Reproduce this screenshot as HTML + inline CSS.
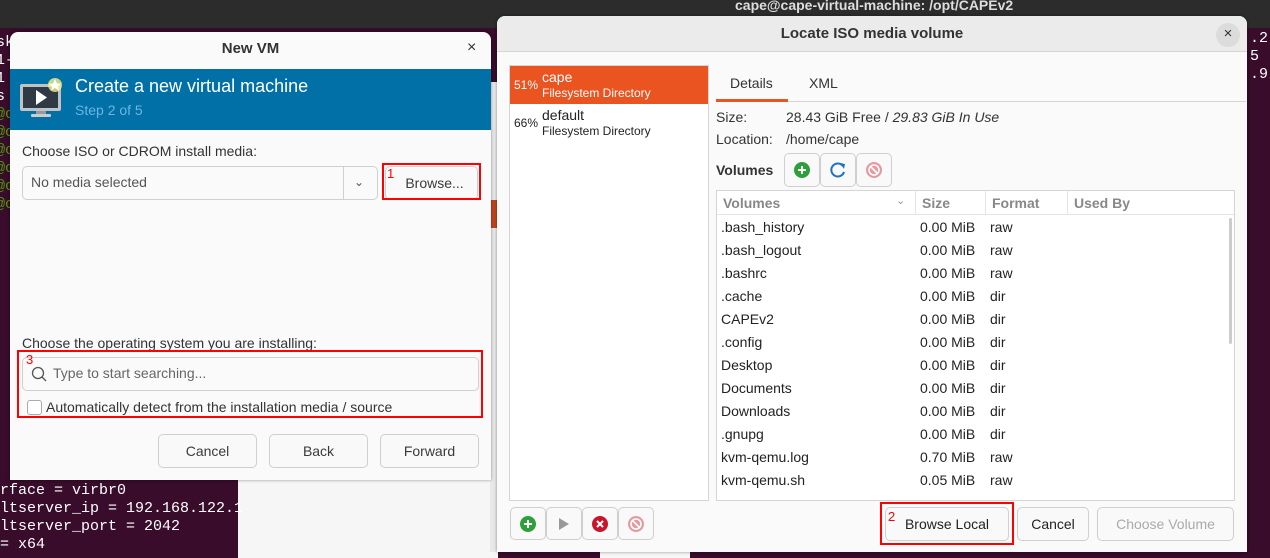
<!DOCTYPE html>
<html><head><style>
*{margin:0;padding:0;box-sizing:border-box}
body{width:1270px;height:558px;overflow:hidden;position:relative;background:#380c2a;font-family:"Liberation Sans","DejaVu Sans",sans-serif;font-size:14px;color:#333}
.a{position:absolute}
.mono{font-family:"Liberation Mono",monospace;color:#fff;font-size:15px}
.btn{position:absolute;border:1px solid #cfcfcf;border-radius:5px;background:#f9f9f9;text-align:center;color:#3a3a3a;font-size:14px}
.red{position:absolute;border:2px solid #f00}
.rn{position:absolute;color:#f00;font-size:13px}
</style></head><body>
<div class="a" style="left:0;top:0;width:1270px;height:28px;background:#2c2c2c"></div>
<div class="a" style="left:735px;top:-3px;color:#ddd;font-size:14px;font-weight:bold">cape@cape-virtual-machine: /opt/CAPEv2</div>
<div class="a mono" style="left:-4px;top:34px;line-height:18px;color:#fff">sk<br>1-<br>1<br>s<br><span style="color:#4e9a06">@c<br>@c<br>@c<br>@c<br>@c<br>@c</span></div>
<div class="a" style="left:238px;top:480px;width:260px;height:78px;background:#f6f6f6"></div>
<div class="a" style="left:490px;top:82px;width:10px;height:470px;background:#e8e8e8"></div>
<div class="a" style="left:490px;top:200px;width:10px;height:28px;background:#c0461e"></div>
<div class="a" style="left:600px;top:540px;width:90px;height:18px;background:#f6f6f6"></div>
<div class="a mono" style="left:0;top:482px;line-height:18px">rface = virbr0<br>ltserver_ip = 192.168.122.1<br>ltserver_port = 2042<br> = x64</div>
<div class="a mono" style="left:1250px;top:30px;line-height:18px">.2<br>5<br>.9</div>

<!-- New VM -->
<div class="a" style="left:10px;top:32px;width:481px;height:448px;background:#fafafa;border-radius:8px 8px 0 0;box-shadow:0 0 3px rgba(0,0,0,.4)"></div>
<div class="a" style="left:10px;top:40px;width:481px;text-align:center;font-weight:bold;font-size:15px;color:#333">New VM</div>
<div class="a" style="left:467px;top:39px;font-size:16px;color:#333">×</div>
<div class="a" style="left:10px;top:69px;width:481px;height:61px;background:#0070a7"></div>
<svg class="a" style="left:18px;top:75px" width="50" height="45" viewBox="0 0 50 45">
<rect x="2" y="9" width="41" height="27" rx="2" fill="#bfc3c6"/><rect x="5" y="12" width="35" height="21" fill="#2f3a44"/>
<polygon points="18,15 18,30 29,22.5" fill="#fff"/><rect x="18" y="36" width="10" height="3" fill="#999"/><rect x="13" y="39" width="20" height="3" rx="1" fill="#ccc"/>
<circle cx="37" cy="10" r="7" fill="#f6f08a" opacity=".8"/><polygon points="37,4 39,8.5 43,8.5 40,11.5 41,15.5 37,13 33,15.5 34,11.5 31,8.5 35,8.5" fill="#fff"/></svg>
<div class="a" style="left:75px;top:76px;color:#fff;font-size:18px">Create a new virtual machine</div>
<div class="a" style="left:75px;top:102px;color:#6cb6df;font-size:14px">Step 2 of 5</div>
<div class="a" style="left:22px;top:143px;font-size:14px">Choose ISO or CDROM install media:</div>
<div class="a" style="left:22px;top:166px;width:356px;height:34px;border:1px solid #cfcfcf;border-radius:5px;background:#fafafa"></div>
<div class="a" style="left:343px;top:167px;width:1px;height:32px;background:#cfcfcf"></div>
<div class="a" style="left:354px;top:175px;font-size:12px;color:#555">&#8964;</div>
<div class="a" style="left:31px;top:174px;color:#555">No media selected</div>
<div class="btn" style="left:385px;top:166px;width:93px;height:34px;line-height:32px;padding-left:6px">Browse...</div>
<div class="red" style="left:382px;top:163px;width:99px;height:37px"></div>
<div class="rn" style="left:387px;top:166px">1</div>
<div class="a" style="left:22px;top:335px;font-size:14px">Choose the operating system you are installing:</div>
<div class="a" style="left:22px;top:357px;width:457px;height:34px;border:1px solid #cfcfcf;border-radius:5px;background:#fafafa"></div>
<svg class="a" style="left:31px;top:366px" width="16" height="16"><circle cx="7" cy="7" r="5.5" fill="none" stroke="#555" stroke-width="1.3"/><line x1="11" y1="11" x2="15" y2="15" stroke="#555" stroke-width="1.3"/></svg>
<div class="a" style="left:53px;top:365px;color:#666">Type to start searching...</div>
<div class="a" style="left:27px;top:400px;width:15px;height:15px;border:1px solid #aaa;border-radius:3px;background:#fff"></div>
<div class="a" style="left:46px;top:399px">Automatically detect from the installation media / source</div>
<div class="red" style="left:17px;top:350px;width:466px;height:68px"></div>
<div class="rn" style="left:26px;top:352px">3</div>
<div class="btn" style="left:158px;top:434px;width:99px;height:34px;line-height:32px">Cancel</div>
<div class="btn" style="left:269px;top:434px;width:99px;height:34px;line-height:32px">Back</div>
<div class="btn" style="left:380px;top:434px;width:99px;height:34px;line-height:32px">Forward</div>

<!-- Locate -->
<div class="a" style="left:497px;top:16px;width:750px;height:536px;background:#fafafa;border-radius:8px 8px 0 0;box-shadow:0 0 3px rgba(0,0,0,.4)"></div>
<div class="a" style="left:497px;top:16px;width:750px;height:36px;background:#ebebeb;border-radius:8px 8px 0 0;border-bottom:1px solid #d5d5d5"></div>
<div class="a" style="left:497px;top:25px;width:750px;text-align:center;font-weight:bold;font-size:15px;color:#333">Locate ISO media volume</div>
<div class="a" style="left:1216px;top:23px;width:24px;height:24px;border-radius:12px;background:#dcdcdc;text-align:center;line-height:22px;font-size:15px">×</div>
<div class="a" style="left:509px;top:65px;width:200px;height:436px;background:#fff;border:1px solid #d5d5d5"></div>
<div class="a" style="left:510px;top:66px;width:198px;height:38px;background:#e95420"></div>
<div class="a" style="left:514px;top:78px;font-size:12px;color:#fff">51%</div>
<div class="a" style="left:542px;top:70px;color:#fff;font-size:14px;line-height:15px">cape<br><span style="font-size:12px">Filesystem Directory</span></div>
<div class="a" style="left:514px;top:116px;font-size:12px;color:#222">66%</div>
<div class="a" style="left:542px;top:108px;color:#222;font-size:14px;line-height:15px">default<br><span style="font-size:12px">Filesystem Directory</span></div>
<div class="a" style="left:716px;top:101px;width:530px;height:1px;background:#d5d5d5"></div>
<div class="a" style="left:716px;top:99px;width:72px;height:3px;background:#e95420"></div>
<div class="a" style="left:730px;top:75px;color:#333">Details</div>
<div class="a" style="left:809px;top:75px;color:#333">XML</div>
<div class="a" style="left:716px;top:109px">Size:</div>
<div class="a" style="left:786px;top:109px">28.43 GiB Free / <i>29.83 GiB In Use</i></div>
<div class="a" style="left:716px;top:131px">Location:</div>
<div class="a" style="left:786px;top:131px">/home/cape</div>
<div class="a" style="left:716px;top:162px;font-weight:bold">Volumes</div>
<div class="btn" style="left:784px;top:153px;width:36px;height:34px"></div>
<div class="btn" style="left:820px;top:153px;width:36px;height:34px"></div>
<div class="btn" style="left:856px;top:153px;width:36px;height:34px"></div>
<svg class="a" style="left:793px;top:161px" width="18" height="18"><circle cx="9" cy="9" r="8" fill="#2ea03a"/><path d="M9 5v8M5 9h8" stroke="#fff" stroke-width="2"/></svg>
<svg class="a" style="left:829px;top:161px" width="18" height="18"><path d="M14 5A6.5 6.5 0 1 0 15 11" fill="none" stroke="#1a72c4" stroke-width="2"/><polygon points="11,2 16,3 15,8" fill="#1a72c4"/></svg>
<svg class="a" style="left:865px;top:161px" width="18" height="18"><circle cx="9" cy="9" r="8" fill="#e59a9f"/><circle cx="9" cy="9" r="5" fill="none" stroke="#fff" stroke-width="1.6"/><path d="M5.5 5.5l7 7" stroke="#fff" stroke-width="1.6"/></svg>
<div class="a" style="left:716px;top:190px;width:519px;height:311px;background:#fff;border:1px solid #d5d5d5"></div>
<div class="a" style="left:717px;top:191px;width:517px;height:24px;border-bottom:1px solid #e5e5e5"></div>
<div class="a" style="left:915px;top:191px;width:1px;height:24px;background:#e5e5e5"></div>
<div class="a" style="left:985px;top:191px;width:1px;height:24px;background:#e5e5e5"></div>
<div class="a" style="left:1067px;top:191px;width:1px;height:24px;background:#e5e5e5"></div>
<div class="a" style="left:723px;top:195px;color:#888;font-weight:bold">Volumes</div>
<div class="a" style="left:896px;top:194px;color:#999;font-size:11px">&#8964;</div>
<div class="a" style="left:922px;top:195px;color:#888;font-weight:bold">Size</div>
<div class="a" style="left:992px;top:195px;color:#888;font-weight:bold">Format</div>
<div class="a" style="left:1074px;top:195px;color:#888;font-weight:bold">Used By</div>
<div class="a" style="left:1229px;top:218px;width:3px;height:126px;background:#ccc;border-radius:2px"></div>
<div class="a" style="left:721px;top:216px;line-height:23px;color:#222">.bash_history<br>.bash_logout<br>.bashrc<br>.cache<br>CAPEv2<br>.config<br>Desktop<br>Documents<br>Downloads<br>.gnupg<br>kvm-qemu.log<br>kvm-qemu.sh</div>
<div class="a" style="left:920px;top:216px;line-height:23px;color:#222">0.00 MiB<br>0.00 MiB<br>0.00 MiB<br>0.00 MiB<br>0.00 MiB<br>0.00 MiB<br>0.00 MiB<br>0.00 MiB<br>0.00 MiB<br>0.00 MiB<br>0.70 MiB<br>0.05 MiB</div>
<div class="a" style="left:990px;top:216px;line-height:23px;color:#222">raw<br>raw<br>raw<br>dir<br>dir<br>dir<br>dir<br>dir<br>dir<br>dir<br>raw<br>raw</div>
<div class="btn" style="left:510px;top:507px;width:36px;height:33px"></div>
<div class="btn" style="left:546px;top:507px;width:36px;height:33px"></div>
<div class="btn" style="left:582px;top:507px;width:36px;height:33px"></div>
<div class="btn" style="left:618px;top:507px;width:36px;height:33px"></div>
<svg class="a" style="left:519px;top:515px" width="18" height="18"><circle cx="9" cy="9" r="8" fill="#2ea03a"/><path d="M9 5v8M5 9h8" stroke="#fff" stroke-width="2"/></svg>
<svg class="a" style="left:556px;top:516px" width="16" height="16"><polygon points="3,2 3,14 13,8" fill="#999"/></svg>
<svg class="a" style="left:591px;top:515px" width="18" height="18"><circle cx="9" cy="9" r="8" fill="#c7162b"/><path d="M6 6l6 6M12 6l-6 6" stroke="#fff" stroke-width="2"/></svg>
<svg class="a" style="left:627px;top:515px" width="18" height="18"><circle cx="9" cy="9" r="8" fill="#e59a9f"/><circle cx="9" cy="9" r="5" fill="none" stroke="#fff" stroke-width="1.6"/><path d="M5.5 5.5l7 7" stroke="#fff" stroke-width="1.6"/></svg>
<div class="btn" style="left:885px;top:507px;width:124px;height:34px;line-height:32px;color:#222">Browse Local</div>
<div class="red" style="left:880px;top:502px;width:134px;height:43px"></div>
<div class="rn" style="left:888px;top:509px">2</div>
<div class="btn" style="left:1017px;top:507px;width:72px;height:34px;line-height:32px;color:#222">Cancel</div>
<div class="btn" style="left:1097px;top:507px;width:137px;height:34px;line-height:32px;color:#aaa">Choose Volume</div>
</body></html>
